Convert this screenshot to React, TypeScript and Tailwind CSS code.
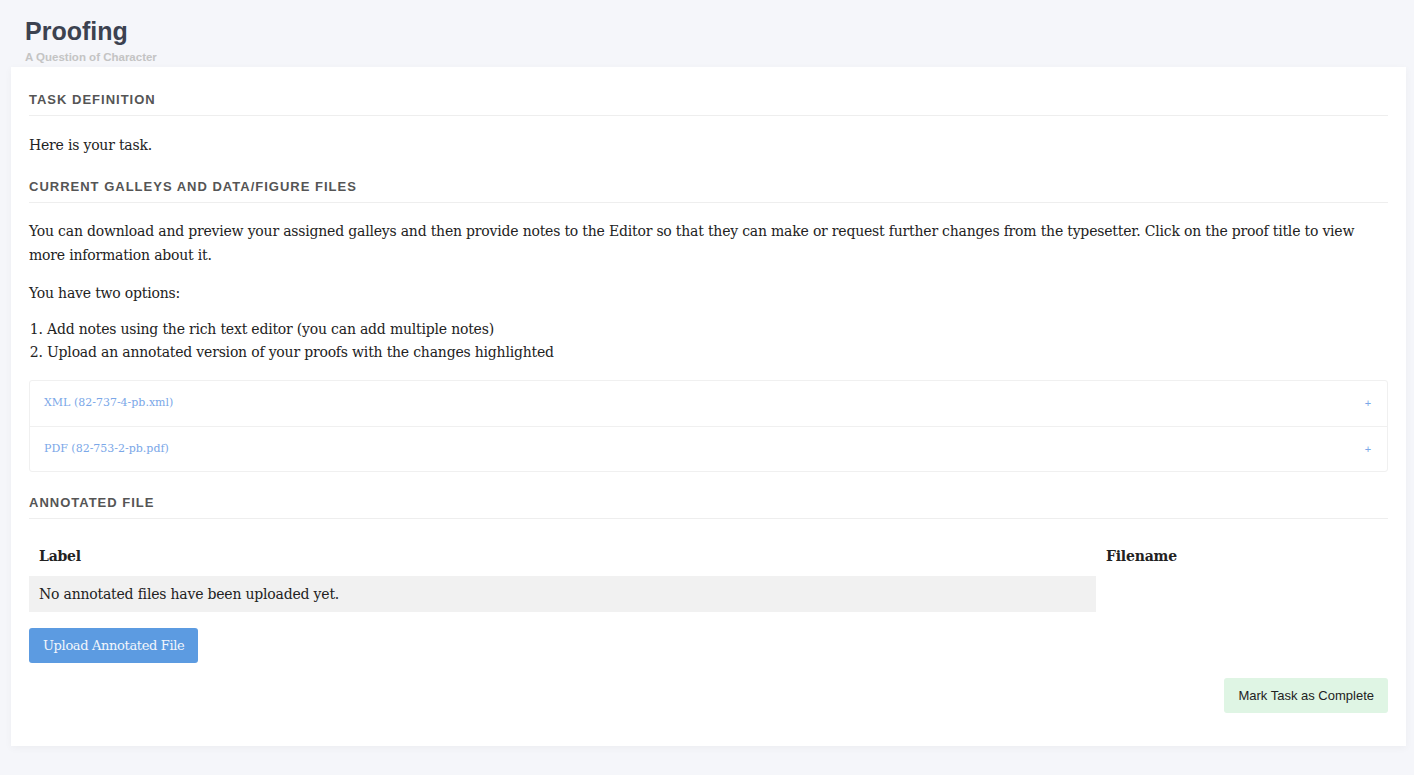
const serif = "font-['DejaVu_Serif',serif]"

function SectionHeading({ children, className = "" }: { children: React.ReactNode; className?: string }) {
	return (
		<div className={`border-b border-[#eeeeee] pb-[5px] ${className}`}>
			<h2 className="font-['Liberation_Sans',Arial,sans-serif] text-[13px] font-bold uppercase tracking-[1px] leading-[20px] text-[#555555]">
				{children}
			</h2>
		</div>
	)
}

const galleys = ["XML (82-737-4-pb.xml)", "PDF (82-753-2-pb.pdf)"]

export default function App() {
	return (
		<div className="min-h-[775px] bg-[#f5f6fa] pb-[29px]">
			<header className="px-[25px] pt-[15px] font-['Liberation_Sans',Arial,sans-serif]">
				<h1 className="text-[25px] font-bold leading-[33px] text-[#3c4250]">Proofing</h1>
				<p className="text-[11.5px] font-bold leading-[19px] text-[#c4c4c4]">A Question of Character</p>
			</header>
			<main className={`ml-[11px] mr-[8px] bg-white px-[18px] pt-[23px] pb-[33px] shadow-[0_2px_8px_rgba(0,0,0,0.04)] ${serif} text-[14px] tracking-[-0.2px] text-[#222222]`}>
				<SectionHeading className="mb-[17px]">Task Definition</SectionHeading>
				<p className="leading-[24px] mb-[20px]">Here is your task.</p>

				<SectionHeading className="mb-[16px]">Current Galleys and Data/Figure Files</SectionHeading>
				<p className="leading-[24px] mb-[14px]">
					You can download and preview your assigned galleys and then provide notes to the Editor so that they can make or request further changes from the typesetter. Click on the proof title to view more information about it.
				</p>
				<p className="leading-[24px] mb-[13px]">You have two options:</p>
				<ol className="list-decimal pl-[18px] leading-[23px] mb-[16px]">
					<li>Add notes using the rich text editor (you can add multiple notes)</li>
					<li>Upload an annotated version of your proofs with the changes highlighted</li>
				</ol>
				<div className="rounded-[3px] border border-[#f0f0f0] mb-[21px]">
					{galleys.map((g, i) => (
						<div
							key={g}
							className={`flex h-[45px] items-center justify-between pl-[14px] pr-[16px] ${i > 0 ? "border-t border-[#f0f0f0]" : ""}`}
						>
							<a className="text-[11px] tracking-normal text-[#7aa7e8]">{g}</a>
							<span className="font-['Liberation_Sans',sans-serif] text-[11px] text-[#7aa7e8]">+</span>
						</div>
					))}
				</div>

				<SectionHeading className="mb-[17px]">Annotated File</SectionHeading>
				<table className="w-full border-collapse mb-[16px]">
					<thead>
						<tr>
							<th className="h-[40px] pl-[10px] text-left font-bold w-[1067px]">Label</th>
							<th className="h-[40px] pl-[10px] text-left font-bold">Filename</th>
						</tr>
					</thead>
					<tbody>
						<tr>
							<td className="h-[36px] bg-[#f1f1f1] pl-[10px]">No annotated files have been uploaded yet.</td>
							<td />
						</tr>
					</tbody>
				</table>
				<button className="h-[35px] rounded-[3px] bg-[#5c9be1] px-[14px] text-[13px] tracking-[-0.35px] text-[#f2f6fc]">
					Upload Annotated File
				</button>
				<div className="flex justify-end mt-[15px]">
					<button className="h-[35px] rounded-[3px] bg-[#dff5e4] px-[14px] font-['Liberation_Sans',Arial,sans-serif] text-[13px] tracking-normal text-[#222222]">
						Mark Task as Complete
					</button>
				</div>
			</main>
		</div>
	)
}
